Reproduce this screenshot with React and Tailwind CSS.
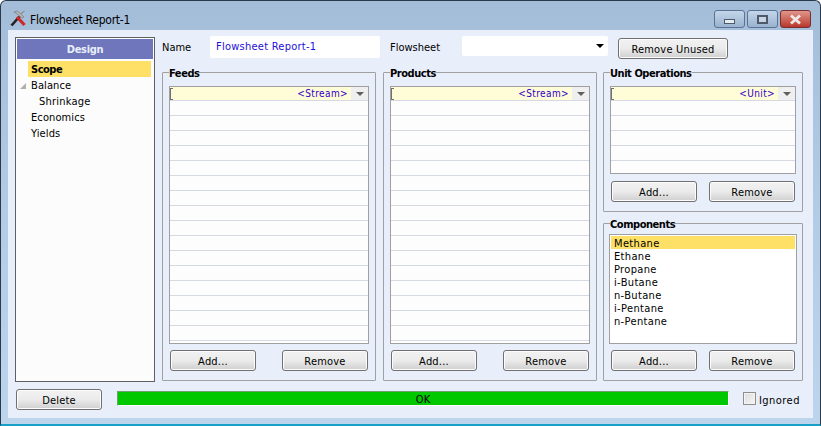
const font = "font-['Tahoma','DejaVu_Sans_Condensed','DejaVu_Sans',sans-serif]";

function Btn({ children, className = "" }) {
  return (
    <button
      type="button"
      className={`h-[21px] rounded-[3px] border border-[#707070] bg-gradient-to-b from-[#f2f2f2] via-[#ebebeb] to-[#cfcfcf] pt-[2px] text-[11px] leading-none tracking-[0.2px] text-black shadow-[inset_0_0_0_1px_#fcfcfc] ${className}`}
    >
      {children}
    </button>
  );
}

function Group({ title, className = "", legendClass = "", children }) {
  return (
    <fieldset className={`rounded-[1px] border border-[#a0a0a0] ${className}`}>
      <legend className={`h-[13px] text-[11px] font-bold leading-[15px] tracking-[-0.45px] text-black ${legendClass}`}>{title}</legend>
      {children}
    </fieldset>
  );
}

function Grid({ label, rows, width, height }) {
  return (
    <div className={`${width} ${height} mt-[7px] overflow-hidden border border-[#a0a0a0] bg-white`}>
      <div className="flex h-[14px] items-stretch border-b border-[#d5d9e2] bg-[#fffcd8]">
        <div className="mt-[1px] h-[12px] w-[3px] border border-r-0 border-[#707070] bg-[#fffcd8]" />
        <span className="flex-1 pr-[3px] text-right text-[10px] leading-[13px] tracking-[0.4px] text-[#3000c8]">{label}</span>
        <div className="flex w-[17px] items-center justify-center bg-[#efefef]">
          <span className="h-0 w-0 border-x-[4px] border-t-[4px] border-x-transparent border-t-[#606060]" />
        </div>
      </div>
      {Array.from({ length: rows }).map((_, i) => (
        <div key={i} className="h-[15px] border-b border-[#d5d9e2] bg-[#fdfdfd]" />
      ))}
    </div>
  );
}

const components = ["Methane", "Ethane", "Propane", "i-Butane", "n-Butane", "i-Pentane", "n-Pentane"];

export default function App() {
  return (
    <div className={`${font} flex h-[426px] w-[821px] flex-col overflow-hidden rounded-t-[6px] border border-b-[2px] border-[#2a3a4a] border-b-[#18a0c8] bg-gradient-to-b from-[#a3bcd8] via-[#b3cce6] to-[#bcd4ec] text-[11px] text-black`}>
      {/* Title bar */}
      <div className="flex h-[29px] shrink-0 items-start">
        <div className="ml-[9px] mt-[9px] flex items-center gap-[3px]">
          <svg width="17" height="17" viewBox="0 0 17 17">
            <path d="M1.5 15.5 L9.5 6.5" stroke="#202020" strokeWidth="2.6" />
            <path d="M4 2 L7 1 L11 4 L14 7 L12 8 L8 4.5 Z" fill="#b8b8b8" stroke="#606060" strokeWidth="0.5" />
            <path d="M7 7 L14.5 15" stroke="#d02828" strokeWidth="3.2" />
            <path d="M11 3.5 L14.5 1" stroke="#909090" strokeWidth="1.5" />
          </svg>
          <span className="pt-[2px] text-[12px] leading-[14px] tracking-[-0.25px]">Flowsheet Report-1</span>
        </div>
        <div className="ml-auto mr-[9px] mt-[9px] flex gap-[2px]">
          <div className="flex h-[18px] w-[31px] items-end justify-center rounded-[3px] border border-[#5a7394] bg-gradient-to-b from-[#c4d6ea] to-[#9ab2ce] pb-[3px]">
            <span className="h-[5px] w-[11px] border border-[#4c5a6c] bg-[#e6ecf4]" />
          </div>
          <div className="flex h-[18px] w-[31px] items-center justify-center rounded-[3px] border border-[#5a7394] bg-gradient-to-b from-[#c4d6ea] to-[#9ab2ce]">
            <span className="h-[9px] w-[11px] border-2 border-[#4c5a6c] bg-[#c8d4e2]" />
          </div>
          <div className="flex h-[18px] w-[31px] items-center justify-center rounded-[3px] border border-[#7a3030] bg-gradient-to-b from-[#e0968c] to-[#b8352a]">
            <svg width="13" height="11" viewBox="0 0 13 11">
              <path d="M2 1.5 L11 9.5 M11 1.5 L2 9.5" stroke="#f0e8e8" strokeWidth="2.8" />
            </svg>
          </div>
        </div>
      </div>

      {/* Client area */}
      <div className="mx-[7px] mb-[6px] flex flex-1 flex-col bg-[#e8eefa] pl-[7px] pr-[9px] pt-[7px]">
        <div className="flex h-[345px] gap-[7px]">
          {/* Nav */}
          <div className="flex h-[345px] w-[140px] shrink-0 flex-col border border-[#606060] bg-[#fcfcfc]">
            <div className="mb-[1px] flex h-[22px] items-center justify-center border border-white bg-[#7076bb] pt-[2px] text-[11px] font-bold tracking-[-0.3px] text-[#e8eefa]">Design</div>
            <div className="ml-[12px] mr-[3px] h-[16px] bg-[#ffe066] pl-[3px] font-bold leading-[18px] tracking-[-0.5px]">Scope</div>
            <div className="relative ml-[15px] h-[16px] leading-[18px] tracking-[0.1px]">
              Balance
              <span className="absolute left-[-11px] top-[6px] h-0 w-0 border-b-[6px] border-l-[6px] border-l-transparent border-b-[#b0b0b0]" />
            </div>
            <div className="ml-[23px] h-[16px] leading-[18px] tracking-[0.2px]">Shrinkage</div>
            <div className="ml-[15px] h-[16px] leading-[18px] tracking-[0.1px]">Economics</div>
            <div className="ml-[15px] h-[16px] leading-[18px] tracking-[0.1px]">Yields</div>
          </div>

          <div className="flex min-w-0 flex-1 flex-col">
            {/* Top row */}
            <div className="flex h-[30px] shrink-0 items-start">
              <label className="mt-[4px] w-[48px] leading-[14px]">Name</label>
              <input
                readOnly
                value="Flowsheet Report-1"
                className="-mt-[1px] h-[22px] w-[170px] rounded-[2px] bg-white px-[6px] pb-[2px] text-[11px] tracking-[0.25px] text-[#1c10d8] outline-none"
              />
              <label className="ml-[10px] mt-[4px] w-[72px] leading-[14px]">Flowsheet</label>
              <div className="-mt-[1px] flex h-[20px] w-[146px] items-center justify-end rounded-[2px] bg-white pr-[4px]">
                <span className="h-0 w-0 border-x-[4px] border-t-[4px] border-x-transparent border-t-black" />
              </div>
              <Btn className="ml-[10px] mt-[1px] h-[21px] w-[110px]">Remove Unused</Btn>
            </div>

            {/* Groups */}
            <div className="-mt-[1px] flex h-[315px]">
              <Group title="Feeds" className="h-[315px] w-[214px] px-[6px]">
                <Grid label="<Stream>" rows={16} width="w-[200px]" height="h-[258px]" />
                <div className="mt-[6px] flex justify-between px-[1px]">
                  <Btn className="w-[86px]">Add...</Btn>
                  <Btn className="w-[86px]">Remove</Btn>
                </div>
              </Group>
              <Group title="Products" className="ml-[7px] h-[315px] w-[214px] px-[6px]">
                <Grid label="<Stream>" rows={16} width="w-[200px]" height="h-[258px]" />
                <div className="mt-[6px] flex justify-between px-[1px]">
                  <Btn className="w-[86px]">Add...</Btn>
                  <Btn className="w-[86px]">Remove</Btn>
                </div>
              </Group>
              <div className="ml-[6px] flex w-[200px] flex-col gap-[5px]">
                <Group title="Unit Operations" className="h-[146px] px-[6px]">
                  <Grid label="<Unit>" rows={5} width="w-[186px]" height="h-[88px]" />
                  <div className="mt-[7px] flex justify-between px-[1px]">
                    <Btn className="w-[86px]">Add...</Btn>
                    <Btn className="w-[86px]">Remove</Btn>
                  </div>
                </Group>
                <Group title="Components" legendClass="ml-[1px]" className="h-[164px] px-[5px]">
                  <div className="mt-[4px] h-[110px] w-[188px] border border-[#a0a0a0] bg-white p-[1px] tracking-[0.35px]">
                    {components.map((c, i) => (
                      <div key={c} className={`h-[13px] pl-[3px] leading-[15px] ${i === 0 ? "bg-[#ffe066]" : ""}`}>{c}</div>
                    ))}
                  </div>
                  <div className="mt-[6px] flex justify-between px-[2px]">
                    <Btn className="w-[86px]">Add...</Btn>
                    <Btn className="w-[86px]">Remove</Btn>
                  </div>
                </Group>
              </div>
            </div>
          </div>
        </div>

        {/* Bottom row */}
        <div className="mt-[7px] flex items-start">
          <Btn className="ml-[1px] w-[86px]">Delete</Btn>
          <div className="ml-[15px] mt-[2px] flex h-[15px] w-[612px] items-center justify-center border border-l-[#70a070] border-t-[#70a070] border-b-white border-r-white bg-[#00c800] pt-[1px] leading-none">OK</div>
          <div className="ml-[14px] mt-[3px] h-[13px] w-[13px] border border-[#8e8e8e] bg-gradient-to-br from-[#dcdcdc] to-[#f6f6f6] shadow-[inset_0_0_0_1px_#f4f4f4]" />
          <span className="ml-[3px] mt-[5px] leading-[14px] tracking-[0.45px]">Ignored</span>
        </div>
      </div>
    </div>
  );
}
